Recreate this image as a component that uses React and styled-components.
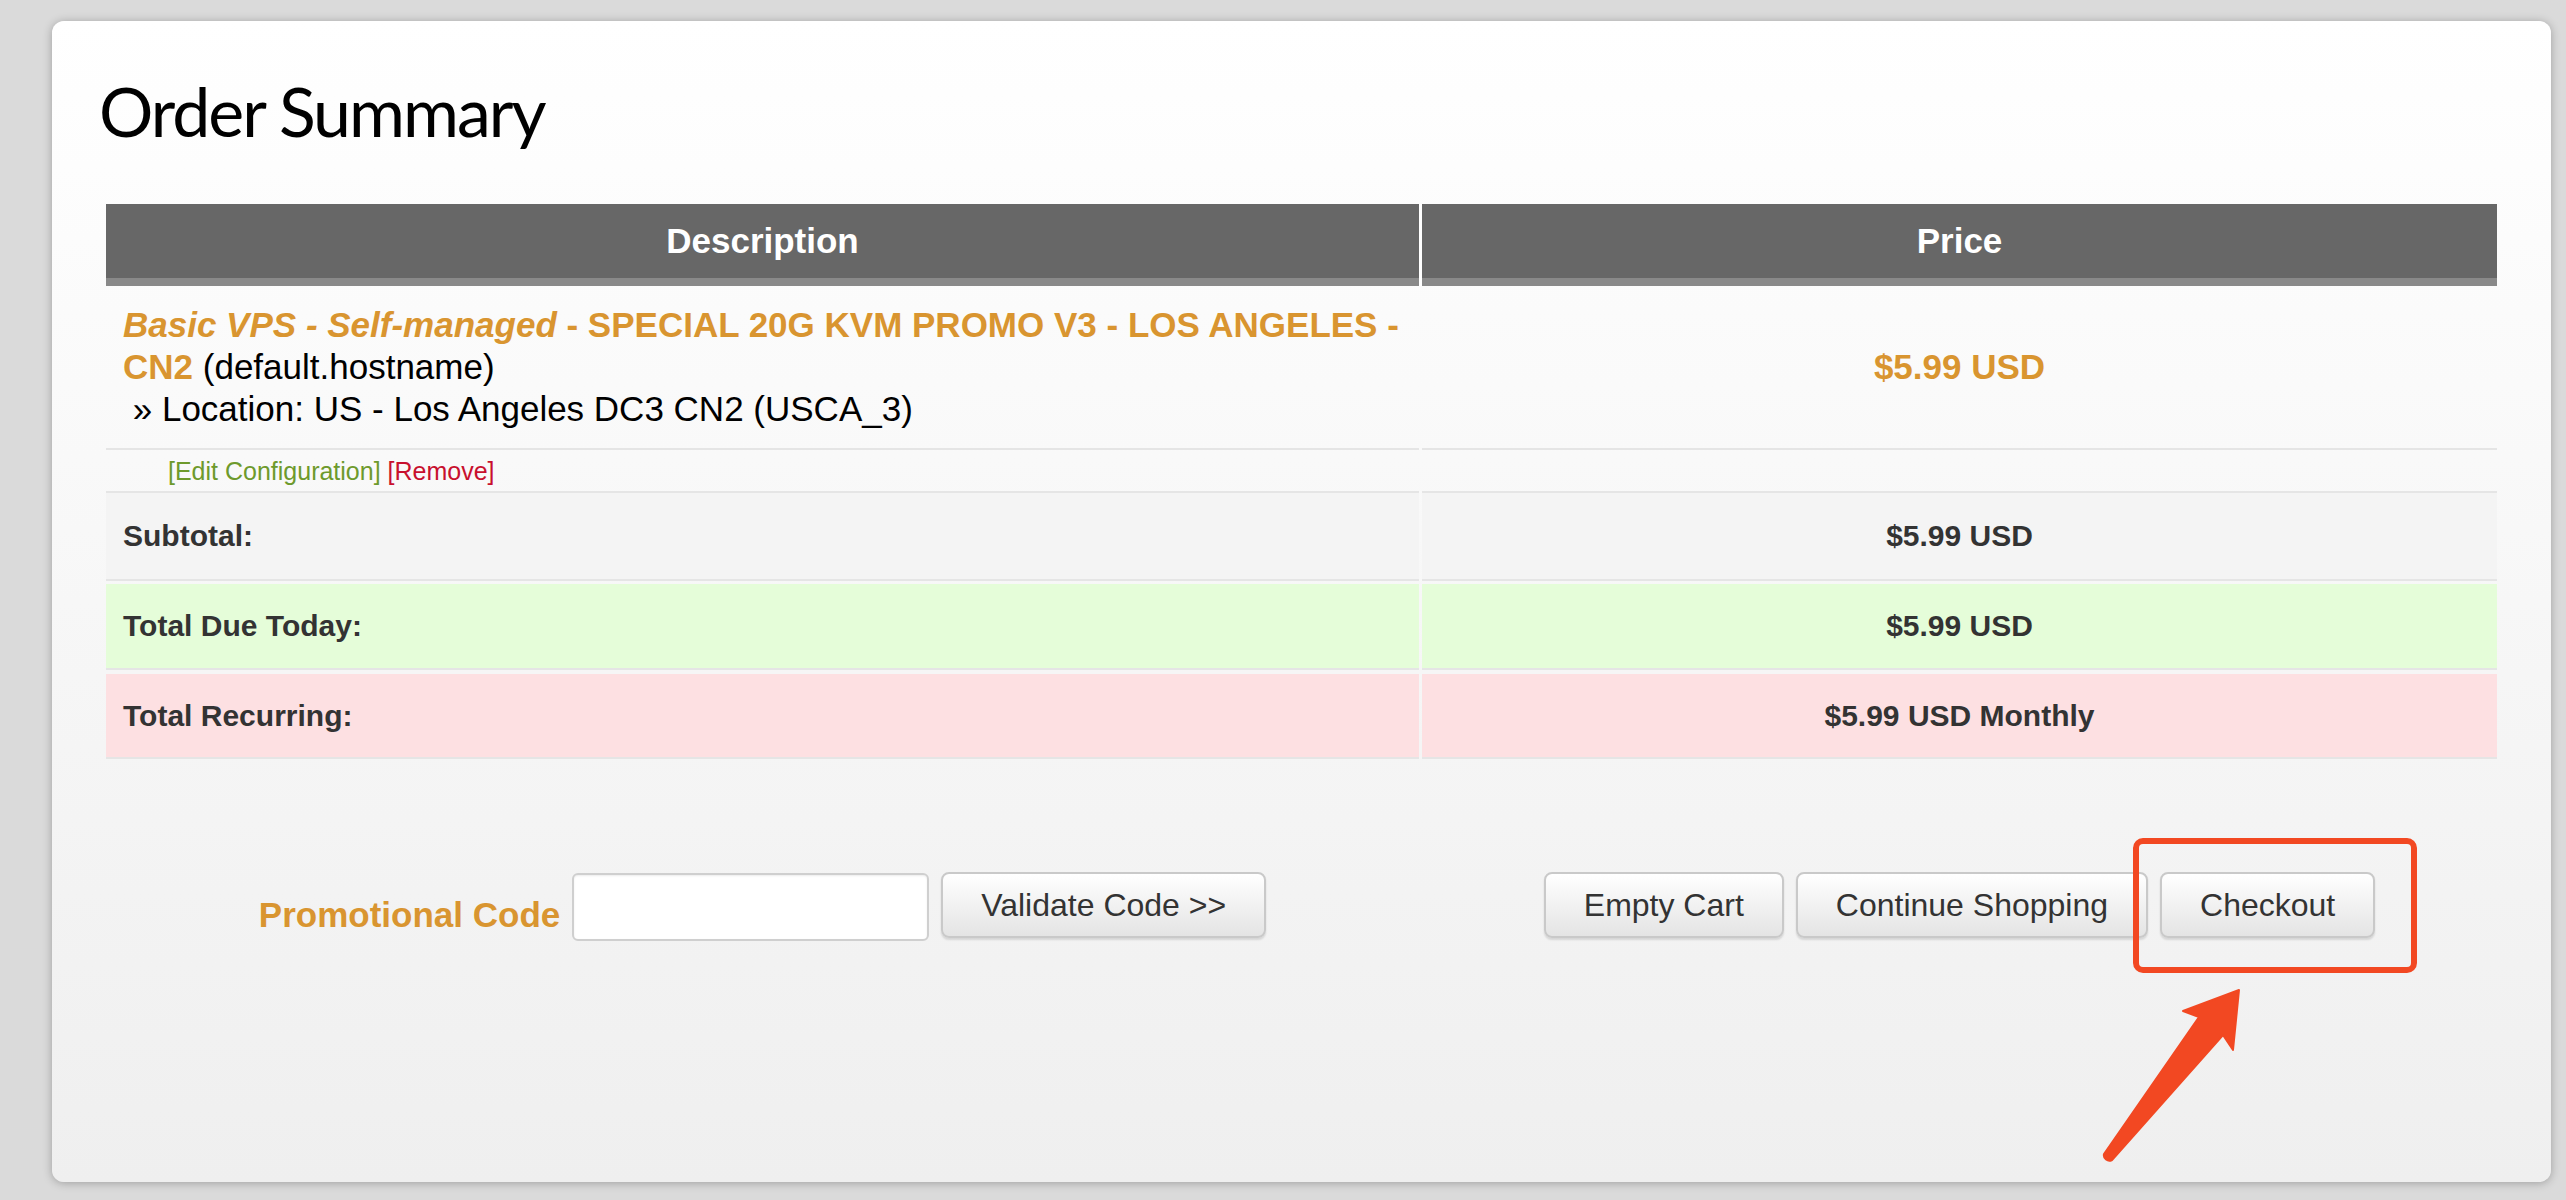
import React from "react";
import styled, { createGlobalStyle } from "styled-components";

const GlobalStyle = createGlobalStyle`
  html, body {
    margin: 0;
    padding: 0;
  }
  body {
    background: #dadada;
    font-family: "Liberation Sans", Arial, sans-serif;
  }
`;

const orange = "#d99530";

const Page = styled.div`
  padding: 21px 15px 18px 52px;
`;

const Card = styled.div`
  position: relative;
  padding: 50px 54px 241px;
  border-radius: 12px;
  background: linear-gradient(#ffffff, #efefef);
  box-shadow: 0 1px 10px rgba(0, 0, 0, 0.28);
`;

const Title = styled.h1`
  margin: 0 0 53px -7px;
  font-family: Lato, "Open Sans", sans-serif;
  font-weight: 400;
  font-size: 68px;
  line-height: 80px;
  letter-spacing: -2px;
  color: #000;
`;

const Row = styled.div`
  display: grid;
  grid-template-columns: 1313fr 1075fr;
  column-gap: 3px;
  margin-top: ${(p) => p.$gap || 0}px;
  background: ${(p) => (p.$head ? "#fff" : "transparent")};
`;

const HeadCell = styled.div`
  height: 74px;
  display: flex;
  align-items: center;
  justify-content: center;
  background: #676767;
  border-bottom: 8px solid #898989;
  color: #fff;
  font-weight: bold;
  font-size: 35px;
`;

const Cell = styled.div`
  display: flex;
  align-items: center;
  justify-content: ${(p) => (p.$center ? "center" : "flex-start")};
  height: ${(p) => (p.$h ? `${p.$h}px` : "auto")};
  padding: 0 17px;
  background: ${(p) => p.$bg || "transparent"};
  border-bottom: 2px solid #e5e5e5;
  color: #333;
  font-weight: bold;
  font-size: 30px;
`;

const ItemCell = styled.div`
  padding: 18px 17px;
  border-bottom: 2px solid #e5e5e5;
  font-size: 35px;
  line-height: 42px;
  color: #000;
  white-space: nowrap;
`;

const Product = styled.span`
  color: ${orange};
  font-weight: bold;
`;

const Group = styled.em`
  font-style: italic;
`;

const PriceCell = styled.div`
  display: flex;
  align-items: center;
  justify-content: center;
  border-bottom: 2px solid #e5e5e5;
  color: ${orange};
  font-weight: bold;
  font-size: 35px;
`;

const LinkCell = styled.div`
  padding: 9px 17px 7px 62px;
  border-bottom: 2px solid #e5e5e5;
  font-size: 25px;
  line-height: 25px;
`;

const EmptyCell = styled.div`
  border-bottom: 2px solid #e5e5e5;
`;

const TextLink = styled.a`
  color: ${(p) => (p.$danger ? "#c8102e" : "#6e9a2c")};
  text-decoration: none;
`;

const Actions = styled.div`
  display: grid;
  grid-template-columns: 1313fr 1075fr;
  column-gap: 3px;
  margin-top: 113px;
`;

const ActionGroup = styled.div`
  display: flex;
  justify-content: center;
  align-items: flex-start;
  gap: 12px;
`;

const PromoLabel = styled.label`
  margin-top: 23px;
  color: ${orange};
  font-weight: bold;
  font-size: 35px;
`;

const PromoInput = styled.input`
  box-sizing: border-box;
  width: 357px;
  height: 68px;
  margin: 1px 0 0;
  border: 2px solid #cfcfcf;
  border-radius: 6px;
  background: #fff;
  box-shadow: inset 0 1px 2px rgba(0, 0, 0, 0.08);
  outline: none;
`;

const Button = styled.button`
  box-sizing: border-box;
  height: 66px;
  padding: 0 38px;
  border: 2px solid #c9c9c9;
  border-radius: 8px;
  background: linear-gradient(#ffffff, #e4e4e4);
  box-shadow: 0 2px 2px rgba(0, 0, 0, 0.12);
  color: #333;
  font-family: "Liberation Sans", Arial, sans-serif;
  font-size: 32px;
  cursor: pointer;
`;

const Highlight = styled.div`
  position: absolute;
  left: 2081px;
  top: 817px;
  width: 284px;
  height: 135px;
  box-sizing: border-box;
  border: 6px solid #f24822;
  border-radius: 10px;
  pointer-events: none;
`;

const Arrow = styled.svg`
  position: absolute;
  left: 2048px;
  top: 959px;
  pointer-events: none;
`;

const App = () => {
  return (
    <Page>
      <GlobalStyle />
      <Card>
        <Title>Order Summary</Title>

        <Row $head>
          <HeadCell>Description</HeadCell>
          <HeadCell>Price</HeadCell>
        </Row>

        <Row>
          <ItemCell>
            <Product>
              <Group>Basic VPS - Self-managed</Group> - SPECIAL 20G KVM PROMO V3 - LOS ANGELES -
            </Product>
            <br />
            <Product>CN2</Product> (default.hostname)
            <br />
            &nbsp;» Location: US - Los Angeles DC3 CN2 (USCA_3)
          </ItemCell>
          <PriceCell>$5.99 USD</PriceCell>
        </Row>

        <Row>
          <LinkCell>
            <TextLink href="#">[Edit Configuration]</TextLink>{" "}
            <TextLink href="#" $danger>
              [Remove]
            </TextLink>
          </LinkCell>
          <EmptyCell />
        </Row>

        <Row>
          <Cell $h={86} $bg="#f4f4f4">Subtotal:</Cell>
          <Cell $h={86} $bg="#f4f4f4" $center>
            $5.99 USD
          </Cell>
        </Row>

        <Row $gap={3}>
          <Cell $h={84} $bg="#e5fdd9">Total Due Today:</Cell>
          <Cell $h={84} $bg="#e5fdd9" $center>
            $5.99 USD
          </Cell>
        </Row>

        <Row $gap={4}>
          <Cell $h={83} $bg="#fde0e2">Total Recurring:</Cell>
          <Cell $h={83} $bg="#fde0e2" $center>
            $5.99 USD Monthly
          </Cell>
        </Row>

        <Actions>
          <ActionGroup>
            <PromoLabel htmlFor="promo">Promotional Code</PromoLabel>
            <PromoInput id="promo" type="text" />
            <Button>Validate Code &gt;&gt;</Button>
          </ActionGroup>
          <ActionGroup>
            <Button>Empty Cart</Button>
            <Button>Continue Shopping</Button>
            <Button>Checkout</Button>
          </ActionGroup>
        </Actions>

        <Highlight />
        <Arrow width="150" height="190" viewBox="0 0 150 190">
          <path
            d="M139 10 L133 70 L123 55 L12 180 A5.5 5.5 0 0 1 4 174 L99 37 L83 31 Z"
            fill="#f24822"
            stroke="#f24822"
            strokeWidth="2"
            strokeLinejoin="round"
          />
        </Arrow>
      </Card>
    </Page>
  );
};

export default App;
